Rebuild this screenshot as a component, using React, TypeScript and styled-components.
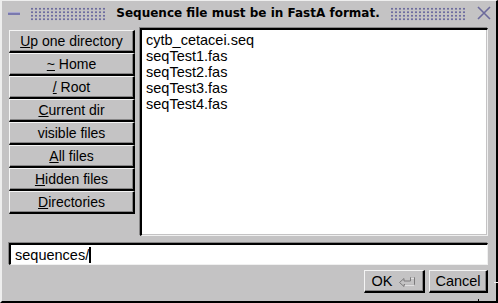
import * as React from 'react';
import styled, { createGlobalStyle } from 'styled-components';

const GlobalStyle = createGlobalStyle`
  html, body {
    margin: 0;
    padding: 0;
    background: #c4c3c4;
  }
  * {
    box-sizing: border-box;
  }
`;

const sideButtons: { label: string; key?: number }[] = [
  { label: 'Up one directory', key: 0 },
  { label: '~ Home', key: 0 },
  { label: '/ Root', key: 0 },
  { label: 'Current dir', key: 0 },
  { label: 'visible files' },
  { label: 'All files', key: 0 },
  { label: 'Hidden files', key: 0 },
  { label: 'Directories', key: 0 }
];

const files = [
  'cytb_cetacei.seq',
  'seqTest1.fas',
  'seqTest2.fas',
  'seqTest3.fas',
  'seqTest4.fas'
];

const Mnemonic = (props: { label: string; at?: number }) => {
  if (props.at === undefined) return <>{props.label}</>;
  const i = props.at;
  return (
    <>
      {props.label.slice(0, i)}
      <u>{props.label[i]}</u>
      {props.label.slice(i + 1)}
    </>
  );
};

const App: React.FunctionComponent = () => {
  return (
    <React.Fragment>
      <GlobalStyle />
      <Window>
        <TitleBar>
          <MinimizeBar />
          <Dots />
          <Title>Sequence file must be in FastA format.</Title>
          <Dots />
          <CloseIcon width="14" height="14" viewBox="0 0 14 14">
            <path d="M1 1 L13 13 M13 1 L1 13" stroke="#6c6a9c" strokeWidth="1.6" fill="none" />
          </CloseIcon>
        </TitleBar>

        <Body>
          <Sidebar>
            {sideButtons.map((b, i) => (
              <SideButton key={i}>
                <Mnemonic label={b.label} at={b.key} />
              </SideButton>
            ))}
          </Sidebar>
          <FileList>
            {files.map(f => (
              <FileRow key={f}>{f}</FileRow>
            ))}
          </FileList>
        </Body>

        <PathInput>
          sequences/<Caret />
        </PathInput>

        <Footer>
          <DialogButton width={61}>
            OK
            <ReturnIcon width="17" height="11" viewBox="0 0 17 11">
              <path
                d="M0.5 6.5 L5 2.5 L5 5 L11.5 5 L11.5 1.5 L15.5 1.5 L15.5 8.5 L5 8.5 L5 10.5 Z"
                fill="none"
                stroke="#7c7b7c"
                strokeWidth="1"
              />
              <path d="M12 2 L15 2 M6 9 L15 9" stroke="#ffffff" strokeWidth="1" />
            </ReturnIcon>
          </DialogButton>
          <DialogButton width={59}>Cancel</DialogButton>
        </Footer>

        <CornerV />
        <CornerH />
      </Window>
    </React.Fragment>
  );
};

const Window = styled('div')`
  position: relative;
  width: 498px;
  height: 303px;
  background: #c4c3c4;
  border-top: 1px solid #eeeeee;
  border-left: 2px solid #eeeeee;
  border-right: 2px solid #000000;
  border-bottom: 2px solid #000000;
  display: flex;
  flex-direction: column;
  font-family: 'Liberation Sans', Arial, sans-serif;
  color: #000;
`;

const TitleBar = styled('div')`
  height: 25px;
  display: flex;
  align-items: center;
  padding: 0 5px 1px 6px;
  gap: 10px;
`;

const MinimizeBar = styled('div')`
  width: 12px;
  height: 3px;
  background: #7a79ae;
  border-top: 1px solid #a9a8d0;
  flex: none;
`;

const Dots = styled('div')`
  flex: 1;
  height: 14px;
  margin-top: 1px;
  background-image: radial-gradient(circle, #6e6da0 0.9px, transparent 1.1px);
  background-size: 4px 3.5px;
  background-position: 0 0;
`;

const Title = styled('div')`
  font-family: 'DejaVu Sans', Verdana, sans-serif;
  font-weight: bold;
  font-size: 12px;
  white-space: nowrap;
  flex: none;
`;

const CloseIcon = styled('svg')`
  flex: none;
  margin-left: 1px;
`;

const Body = styled('div')`
  display: flex;
  gap: 4px;
  padding: 2px 8px 0 7px;
  height: 210px;
`;

const Sidebar = styled('div')`
  width: 126px;
  padding-top: 2px;
  display: flex;
  flex-direction: column;
  flex: none;
`;

const SideButton = styled('div')`
  height: 23px;
  border-top: 1px solid #f4f4f4;
  border-left: 1px solid #f4f4f4;
  border-right: 2px solid #000;
  border-bottom: 2px solid #000;
  box-shadow: inset -1px -1px 0 #868586;
  background: #c4c3c4;
  font-size: 14px;
  line-height: 20px;
  text-align: center;
  white-space: nowrap;
`;

const FileList = styled('div')`
  flex: 1;
  background: #ffffff;
  border-top: 2px solid #000;
  border-left: 2px solid #000;
  border-right: 1px solid #f0f0f0;
  border-bottom: 1px solid #f0f0f0;
  box-shadow: -1px -1px 0 #868586, inset -1px -1px 0 #c4c3c4;
  padding: 2px 0 0 4px;
  margin-left: 1px;
`;

const FileRow = styled('div')`
  font-size: 14.5px;
  line-height: 16px;
  height: 16px;
  white-space: nowrap;
`;

const PathInput = styled('div')`
  margin: 7px 8px 0 7px;
  height: 22px;
  background: #ffffff;
  border-top: 2px solid #000;
  border-left: 2px solid #000;
  border-right: 1px solid #f0f0f0;
  border-bottom: 1px solid #f0f0f0;
  box-shadow: -1px -1px 0 #868586;
  font-size: 14.5px;
  line-height: 18px;
  padding-left: 4px;
  display: flex;
  align-items: center;
  white-space: nowrap;
`;

const Caret = styled('span')`
  display: inline-block;
  width: 2px;
  height: 16px;
  background: #000;
`;

const Footer = styled('div')`
  display: flex;
  justify-content: flex-end;
  gap: 4px;
  padding: 5px 8px 0 0;
`;

const DialogButton = styled('div')<{ width: number }>`
  width: ${props => props.width}px;
  height: 23px;
  border-top: 1px solid #f4f4f4;
  border-left: 1px solid #f4f4f4;
  border-right: 2px solid #000;
  border-bottom: 2px solid #000;
  box-shadow: inset -1px -1px 0 #868586;
  font-size: 14.5px;
  line-height: 19px;
  display: flex;
  align-items: center;
  justify-content: center;
  gap: 7px;
`;

const ReturnIcon = styled('svg')`
  flex: none;
`;

const CornerV = styled('div')`
  position: absolute;
  right: -2px;
  top: 281px;
  width: 4px;
  height: 1px;
  background: #000;
  border-top: 1px solid #eee;
`;

const CornerH = styled('div')`
  position: absolute;
  left: 476px;
  bottom: -2px;
  width: 1px;
  height: 4px;
  background: #000;
`;

export default App;
